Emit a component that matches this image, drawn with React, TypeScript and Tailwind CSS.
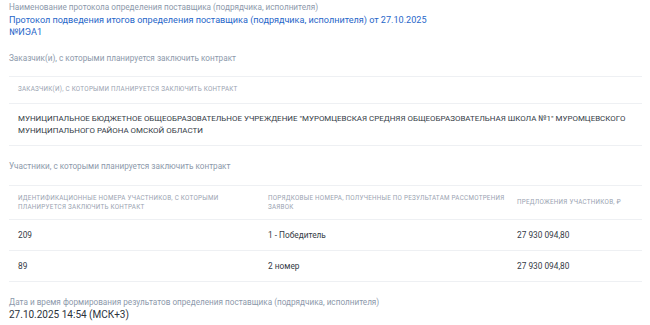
const font = { fontFamily: 'Roboto, "Noto Sans", sans-serif' };

const rows = [
  { id: '209', place: '1 - Победитель', price: '27 930 094,80' },
  { id: '89', place: '2 номер', price: '27 930 094,80' },
];

export default function App() {
  return (
    <div style={font} className="w-[650px] h-[325px] bg-white overflow-hidden px-[9px] pt-[2px]">
      <div className="text-[8.2px] leading-[10px] text-[#8d99ab]">
        Наименование протокола определения поставщика (подрядчика, исполнителя)
      </div>
      <div className="mt-[2px] text-[9.1px] leading-[12px] text-[#1f66c9]">
        Протокол подведения итогов определения поставщика (подрядчика, исполнителя) от 27.10.2025
        <br />
        №ИЭА1
      </div>

      <div className="mt-[15px] text-[8.2px] leading-[10px] text-[#8d99ab]">
        Заказчик(и), с которыми планируется заключить контракт
      </div>

      <table className="mt-[13px] w-[633px] border-collapse">
        <thead>
          <tr className="border-y border-[#eef0f3]">
            <th className="h-[27px] px-[9px] text-left align-middle font-normal text-[6.3px] uppercase tracking-[0.04em] text-[#9aa3b1]">
              Заказчик(и), с которыми планируется заключить контракт
            </th>
          </tr>
        </thead>
        <tbody>
          <tr className="border-b border-[#eef0f3]">
            <td className="h-[42px] pl-[9px] pr-0 align-middle text-[7.95px] leading-[12px] uppercase text-[#333a45]">
              Муниципальное бюджетное общеобразовательное учреждение "Муромцевская средняя общеобразовательная школа №1" Муромцевского муниципального района Омской области
            </td>
          </tr>
        </tbody>
      </table>

      <div className="mt-[15px] text-[8.2px] leading-[10px] text-[#8d99ab]">
        Участники, с которыми планируется заключить контракт
      </div>

      <table className="mt-[14px] w-[633px] border-collapse table-fixed">
        <colgroup>
          <col className="w-[250px]" />
          <col className="w-[249px]" />
          <col />
        </colgroup>
        <thead>
          <tr className="border-y border-[#eef0f3]">
            <th className="h-[34px] px-[9px] text-left align-middle font-normal text-[6.3px] leading-[9px] uppercase tracking-[0.04em] text-[#9aa3b1]">
              Идентификационные номера участников, с которыми планируется заключить контракт
            </th>
            <th className="h-[34px] pl-[9px] pr-[2px] text-left align-middle font-normal text-[6.3px] leading-[9px] uppercase tracking-[0.04em] text-[#9aa3b1]">
              Порядковые номера, полученные по результатам рассмотрения заявок
            </th>
            <th className="h-[34px] px-[9px] text-left align-middle font-normal text-[6.3px] leading-[9px] uppercase tracking-[0.04em] text-[#9aa3b1]">
              Предложения участников, ₽
            </th>
          </tr>
        </thead>
        <tbody>
          {rows.map((r) => (
            <tr key={r.id} className="border-b border-[#eef0f3]">
              <td className="h-[31px] px-[9px] align-middle text-[8.3px] text-[#333a45]">{r.id}</td>
              <td className="h-[31px] px-[9px] align-middle text-[8.3px] text-[#333a45]">{r.place}</td>
              <td className="h-[31px] px-[9px] align-middle text-[8.3px] text-[#333a45]">{r.price}</td>
            </tr>
          ))}
        </tbody>
      </table>

      <div className="mt-[15px] text-[8.2px] leading-[10px] text-[#8d99ab]">
        Дата и время формирования результатов определения поставщика (подрядчика, исполнителя)
      </div>
      <div className="mt-[2px] text-[10px] leading-[12px] text-[#2c323b]">27.10.2025 14:54 (МСК+3)</div>
    </div>
  );
}
